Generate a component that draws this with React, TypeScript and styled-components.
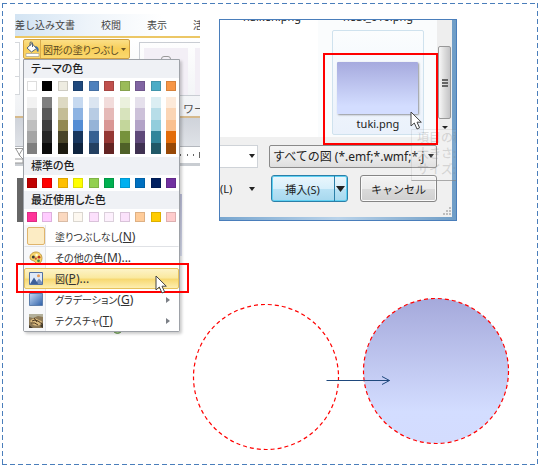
import React from "react";
import styled, { createGlobalStyle, css } from "styled-components";

const GlobalStyle = createGlobalStyle`
  * { box-sizing: border-box; }
  body {
    margin: 0;
    background: #fff;
    font-family: "Noto Sans", "Noto Sans CJK JP", sans-serif;
    font-size: 11px;
    color: #333;
  }
  button, select, input { font: inherit; color: inherit; margin: 0; }
`;

const blue = "#4a7ebb";
const dashX = `repeating-linear-gradient(90deg, ${blue} 0 5px, transparent 5px 8px)`;
const dashY = `repeating-linear-gradient(180deg, ${blue} 0 5px, transparent 5px 8px)`;

const Slide = styled.main`
  margin: 3px 4px 5px 2px;
  padding: 11px 12px 12px 13px;
  display: grid;
  grid-template-columns: 185px minmax(0, 1fr);
  column-gap: 19px;
  align-items: start;
  background:
    ${dashX} top / 100% 1px no-repeat,
    ${dashX} bottom / 100% 1px no-repeat,
    ${dashY} left / 1px 100% no-repeat,
    ${dashY} right / 1px 100% no-repeat;
`;

/* ---------- ribbon ---------- */

const Editor = styled.section`
  position: relative;
`;

const EditorView = styled.div`
  overflow: hidden;
`;

const TabBar = styled.nav`
  display: flex;
  gap: 26px;
  height: 24px;
  border-bottom: 2px solid #ecc766;
  background: linear-gradient(90deg, #d3e4f3, #eef4fa 40%, #fff 80%), #fff;
`;

const Tab = styled.button`
  flex: none;
  border: 0;
  padding: 0;
  background: none;
  font-size: 10px;
  line-height: 22px;
  color: #444;
`;

const Ribbon = styled.div`
  display: grid;
  grid-template-columns: 124px 1fr;
  height: 80px;
  background: linear-gradient(#fff, #eff1f4);
  border-bottom: 2px solid #d5b98c;
`;

const RibbonTools = styled.div`
  display: flex;
  align-items: flex-start;
  padding-top: 1px;
`;

const Spinner = styled.div`
  width: 5px;
  height: 53px;
  margin: 3px 3px 0 0;
  border: 1px solid #d5d8dc;
  border-left: 0;
  background: linear-gradient(#fff 0 16px, #d5d8dc 16px 17px, #fff 17px 33px, #d5d8dc 33px 34px, #fff 34px);
`;

const FillButton = styled.button`
  display: flex;
  align-items: center;
  width: 107px;
  height: 20px;
  padding: 0 3px 0 0;
  border: 1px solid #d0a043;
  border-radius: 2px;
  background: linear-gradient(#fbdf87, #f8ce58 50%, #fbd970);
  color: #5b4a24;
  font-size: 10px;
  white-space: nowrap;
  font-feature-settings: "palt";
`;

const FillIcon = styled.span`
  flex: none;
  display: grid;
  place-items: center;
  width: 17px;
  height: 18px;
  margin-right: 2px;
  border-right: 1px solid #d9ac4c;
`;

const FillText = styled.span`
  flex: 1;
  text-align: left;
`;

const Gallery = styled.div`
  display: flex;
  gap: 7px;
  height: 54px;
  margin-top: 4px;
  padding: 5px 0 0 4px;
  border: 1px solid #c9cdd3;
  border-right: 0;
  overflow: hidden;
`;

const GalleryItem = styled.div`
  flex: none;
  display: flex;
  justify-content: center;
  width: 44px;
  height: 47px;
  padding-top: 7px;
  background: #f3eff6;
`;

const WordArt = styled.div`
  padding: 5px 0 0 44px;
  color: #555;
  line-height: 16px;
  white-space: nowrap;
  overflow: hidden;
`;

const Band = styled.div`
  height: 29px;
  background: linear-gradient(#cfd3da, #dfe2e7);
  border-bottom: 1px solid #b3b7bd;
`;

const Ruler = styled.div`
  display: flex;
  align-items: center;
  justify-content: space-between;
  height: 19px;
  background: #fff;
  border-bottom: 3px solid #c9cdd2;
`;

const Page = styled.div`
  display: flex;
  justify-content: space-between;
  height: 168px;
  padding: 12px 18px 0 2px;
`;

const DarkBlock = styled.div`
  width: 7px;
  height: 44px;
  background: #666;
`;

const LavenderEdge = styled.div`
  width: 3px;
  height: 62px;
  margin-top: 16px;
  background: linear-gradient(#c2c4e0, #dfe4f6);
`;

const ShapeHandle = styled.div`
  position: absolute;
  left: 98px;
  top: 311px;
  width: 9px;
  height: 9px;
  border: 1px solid #6d9a55;
  border-radius: 50%;
  background: #a9d18e;
`;

/* ---------- drop-down menu ---------- */

const Menu = styled.div`
  position: absolute;
  left: 8px;
  top: 45px;
  width: 157px;
  border: 1px solid #9ea2a8;
  border-radius: 0 0 2px 2px;
  background: #fff;
  box-shadow: 2px 2px 3px #0003;
  font-feature-settings: "palt";
`;

const GroupTitle = styled.h2`
  margin: 0;
  padding-left: 7px;
  height: 18px;
  line-height: 18px;
  font-size: 11px;
  font-weight: 500;
  color: #222;
  background: #eff1f5;
`;

const Swatches = styled.div`
  display: flex;
  justify-content: space-between;
  padding: 3px;
`;

const Swatch = styled.button<{ $c: string }>`
  width: 10px;
  height: 10px;
  padding: 0;
  border: 1px solid #0002;
  background: ${(p) => p.$c};
`;

const Shades = styled.div`
  display: grid;
  grid-template-rows: repeat(5, 1fr);
  width: 10px;
  height: 57px;
`;

const Shade = styled.button<{ $c: string }>`
  padding: 0;
  border: 0;
  background: ${(p) => p.$c};
`;

const Items = styled.div`
  display: flex;
  flex-direction: column;
  background: linear-gradient(90deg, #f7f8fa 21px, #e3e5e9 21px 22px, #fff 22px);
`;

const Item = styled.button<{ $active?: boolean; $ruled?: boolean }>`
  display: flex;
  align-items: center;
  height: 21px;
  padding: 0 8px 0 2px;
  border: 1px solid transparent;
  background: none;
  color: #333;
  font-size: 10px;
  white-space: nowrap;
  font-feature-settings: "palt";
  ${(p) => p.$ruled && css`height: 22px; border-bottom-color: #e0e2e6;`}
  ${(p) =>
    p.$active &&
    css`
      border-color: #e6c15b;
      border-radius: 2px;
      background: linear-gradient(#fdf3c8, #fae9a0 45%, #f7d973 55%, #fdeeb0);
    `}
`;

const ItemIcon = styled.span`
  display: grid;
  place-items: center;
  width: 18px;
  height: 18px;
  margin-right: 10px;
`;

const ItemText = styled.span`
  flex: 1;
  text-align: left;
`;

const KeyHint = styled.span`
  font-size: 12px;
`;

const NoFill = styled.span`
  width: 18px;
  height: 18px;
  border: 1px solid #dfb46c;
  border-radius: 2px;
  background: #fcecc4;
`;

const MenuMark = styled.div`
  position: absolute;
  left: -8px;
  top: 203px;
  width: 173px;
  height: 30px;
  border: 2px solid #f00;
  pointer-events: none;
`;

const MenuPointer = styled.div`
  position: absolute;
  right: 19px;
  bottom: -4px;
  line-height: 0;
`;

/* ---------- insert dialog ---------- */

const RightColumn = styled.div`
  padding-top: 5px;
`;

const Dialog = styled.section`
  position: relative;
  max-width: 238px;
  padding: 0 4px 3px 0;
  border: 1px solid ${blue};
  background: linear-gradient(90deg, #78a6cf, #b9d3ea 50%, #6f9dc6);
  overflow: hidden;
  color: #222;
`;

const FileArea = styled.div`
  display: flex;
  height: 117px;
  background: linear-gradient(90deg, #fff 98px, #fafcfd 98px);
`;

const Files = styled.div`
  flex: 1;
  display: grid;
  grid-template-columns: 92px 92px;
  column-gap: 14px;
  align-content: start;
  padding-left: 6px;
`;

const FileName = styled.span`
  height: 14px;
  margin: -10px 0 6px;
  line-height: 14px;
  text-align: center;
`;

const SelectedFile = styled.div`
  position: relative;
  grid-column: 2;
  height: 105px;
  padding: 31px 0 0 4px;
  border: 1px solid #cfe2ee;
  border-radius: 2px;
  background: linear-gradient(#fbfdfe, #eaf1fb);
`;

const Thumb = styled.div`
  width: 81px;
  height: 52px;
  border-radius: 1px;
  background: linear-gradient(#a6aade, #d3ddff 85%);
  box-shadow: 1px 1px 2px #0006;
`;

const ThumbName = styled.div`
  width: 82px;
  line-height: 20px;
  text-align: center;
`;

const FileMark = styled.div`
  position: absolute;
  z-index: 1;
  left: -10px;
  top: 22px;
  width: 115px;
  height: 92px;
  border: 2px solid #f00;
  pointer-events: none;
`;

const FilePointer = styled.div`
  position: absolute;
  z-index: 2;
  left: 77px;
  top: 80px;
  line-height: 0;
`;

const ScrollBar = styled.div`
  display: flex;
  flex-direction: column;
  align-items: center;
  justify-content: flex-end;
  gap: 7px;
  width: 15px;
  padding-bottom: 8px;
  background: #eee;
`;

const ScrollThumb = styled.div`
  display: flex;
  flex-direction: column;
  align-items: center;
  justify-content: center;
  gap: 1px;
  width: 13px;
  height: 73px;
  border: 1px solid #989898;
  border-radius: 2px;
  background: linear-gradient(90deg, #f7f7f7, #dcdcdc 50%, #c4c4c6);
`;

const Grip = styled.i`
  width: 6px;
  height: 2px;
  background: #666;
`;

const Footer = styled.form`
  display: grid;
  row-gap: 7px;
  padding: 8px 15px 15px 0;
  background: #f0f0f0;
`;

const FooterRow = styled.div`
  display: flex;
  justify-content: space-between;
  align-items: center;
`;

const Field = styled.div<{ $w: number }>`
  position: relative;
  flex: 0 0 ${(p) => p.$w}px;
  display: flex;
`;

const NameInput = styled.input`
  width: 100%;
  height: 23px;
  border: 1px solid #cfd3d8;
  border-left: 0;
  background: #fff;
`;

const TypeSelect = styled.select`
  appearance: none;
  width: 100%;
  height: 23px;
  padding: 0 10px 0 3px;
  border: 1px solid #8a8a8a;
  border-radius: 2px;
  background: linear-gradient(#f4f4f4, #ececec 50%, #dedede);
  font-size: 12px;
`;

const FieldCaret = styled.span`
  position: absolute;
  right: 3px;
  top: 9px;
  line-height: 0;
  pointer-events: none;
`;

const Tools = styled.button`
  display: flex;
  align-items: center;
  justify-content: space-between;
  width: 38px;
  padding: 0 3px 0 0;
  border: 0;
  background: none;
`;

const Split = styled.div`
  display: flex;
  width: 77px;
  height: 27px;
  border: 1px solid #2b7fa8;
  border-radius: 3px;
  background: linear-gradient(#eaf6fc, #d7effb 50%, #b9e2f5 52%, #a6d8ee);
  box-shadow: inset 0 0 0 1px #5fd0f2;
`;

const SplitPart = styled.button<{ $arrow?: boolean }>`
  flex: ${(p) => (p.$arrow ? "0 0 13px" : "1")};
  display: grid;
  place-items: center;
  padding: 0;
  border: 0;
  background: none;
  ${(p) => p.$arrow && css`border-left: 1px solid #2b7fa8;`}
`;

const Cancel = styled.button`
  width: 77px;
  height: 27px;
  padding: 0;
  border: 1px solid #858585;
  border-radius: 3px;
  background: linear-gradient(#f3f3f3, #ebebeb 50%, #dadada 52%, #d0d0d0);
  box-shadow: inset 0 0 0 1px #fafafa;
`;

const ResizeGrip = styled.div`
  position: absolute;
  right: 5px;
  bottom: 5px;
  line-height: 0;
`;

const GhostTip = styled.div`
  position: absolute;
  right: 0;
  top: 109px;
  width: 45px;
  height: 52px;
  padding-left: 5px;
  border: 1px solid #00000012;
  border-right: 0;
  border-bottom: 1px solid #808080a0;
  background: #ffffff18;
  color: #80808040;
  font-size: 12px;
  font-weight: 500;
  line-height: 16px;
  white-space: nowrap;
  overflow: hidden;
  pointer-events: none;
`;

const Figure = styled.svg`
  display: block;
  width: 320px;
  height: 158px;
  margin: 74px 0 0 -29px;
`;

const Caret = ({ w = 6, h = 4, color = "#222" }) => (
  <svg width={w} height={h} viewBox="0 0 6 4" preserveAspectRatio="none" aria-hidden>
    <path d="M0 0H6L3 4Z" fill={color} />
  </svg>
);

const Pointer = () => (
  <svg width="13" height="20" viewBox="0 0 13 20" aria-hidden>
    <path d="M1 1V15L4.3 12L7 18L9.6 16.8L7 11.2H11.3Z" fill="#fff" stroke="#444" />
  </svg>
);

const SubArrow = () => (
  <svg width="4" height="6" viewBox="0 0 4 6" aria-hidden>
    <path d="M0 0L4 3L0 6Z" fill="#7b7f86" />
  </svg>
);

const BucketIcon = () => (
  <svg width="15" height="16" viewBox="0 0 15 16" aria-hidden>
    <path d="M2 7L7 2.5L11.5 7.5L6.5 11Z" fill="#fff" stroke="#53657c" />
    <path d="M5 5V1.5Q6.5 0 7.5 2V6" fill="none" stroke="#53657c" />
    <path d="M10 5Q14.5 5.5 13.5 10.5Q11.5 11.5 11.5 8Z" fill="#3e6ea8" />
    <path d="M1 12.5H14V15.5H1Z" fill="#fff" stroke="#a7a28d" strokeWidth=".7" />
  </svg>
);

const PaletteIcon = () => (
  <svg width="14" height="14" viewBox="0 0 14 14" aria-hidden>
    <path d="M7 1C11 1 13 4 13 7.5C13 11 10.5 13 8 13C6 13 7 10.5 5 10C3 9.5 1 9 1 6.5C1 3 4 1 7 1Z" fill="#f6d56b" stroke="#b98a2e" strokeWidth=".8" />
    <circle cx="4.3" cy="6" r="1.5" fill="#3d3b35" />
    <circle cx="7.6" cy="4" r="1.3" fill="#fff7d8" />
    <circle cx="10" cy="6.2" r="1.4" fill="#b83226" />
    <circle cx="9.5" cy="9.8" r="1.4" fill="#3f8a46" />
    <circle cx="6.8" cy="7.7" r="1.1" fill="#c44a36" />
  </svg>
);

const PictureIcon = () => (
  <svg width="14" height="13" viewBox="0 0 14 13" aria-hidden>
    <path d="M.5 .5H13.5V12.5H.5Z" fill="#dfe9f7" stroke="#5371a2" />
    <path d="M1 12L5 5.5L8 10L10 8L13 12Z" fill="#3d5f99" />
    <path d="M8 9L10 6.5L13 10V12H9Z" fill="#7590bd" />
    <circle cx="9.5" cy="3.8" r="1.5" fill="#e89a55" />
  </svg>
);

const GradientIcon = () => (
  <svg width="14" height="13" viewBox="0 0 14 13" aria-hidden>
    <defs>
      <linearGradient id="gi" x1="0" y1="0" x2="1" y2="1">
        <stop offset="0" stopColor="#c5dbf5" />
        <stop offset="1" stopColor="#2d5fa8" />
      </linearGradient>
    </defs>
    <path d="M.5 .5H13.5V12.5H.5Z" fill="url(#gi)" stroke="#5c7eac" />
  </svg>
);

const TextureIcon = () => (
  <svg width="14" height="14" viewBox="0 0 14 14" aria-hidden>
    <path d="M0 0H14V14H0Z" fill="#8d7a58" />
    <path d="M0 0H14V3L9 2L4 4L0 3Z" fill="#b3b09b" />
    <path d="M1 7Q4 3 8 5T13 7L11 11Q6 13 3 10Z" fill="#d9b97d" />
    <path d="M3 7Q6 5 9 7T13 10M2 9Q6 8 9 11M5 4L8 8" fill="none" stroke="#4b3923" />
    <path d="M0 11L4 14H0ZM11 12L14 9V14Z" fill="#42392a" />
  </svg>
);

const theme = ["#ffffff", "#000000", "#eeece1", "#1f497d", "#4f81bd", "#c0504d", "#9bbb59", "#8064a2", "#4bacc6", "#f79646"];
const shades = [
  ["#f2f2f2", "#d8d8d8", "#bfbfbf", "#a5a5a5", "#7f7f7f"],
  ["#7f7f7f", "#595959", "#3f3f3f", "#262626", "#0c0c0c"],
  ["#ddd9c3", "#c4bd97", "#938953", "#494429", "#1d1b10"],
  ["#c6d9f0", "#8db3e2", "#548dd4", "#17365d", "#0f243e"],
  ["#dbe5f1", "#b8cce4", "#95b3d7", "#366092", "#244061"],
  ["#f2dcdb", "#e5b9b7", "#d99694", "#953734", "#632423"],
  ["#ebf1dd", "#d7e3bc", "#c3d69b", "#76923c", "#4f6128"],
  ["#e5e0ec", "#ccc1d9", "#b2a2c7", "#5f497a", "#3f3151"],
  ["#dbeef3", "#b7dde8", "#92cddc", "#31859b", "#205867"],
  ["#fdeada", "#fbd5b5", "#fac08f", "#e36c09", "#974806"],
];
const standard = ["#c00000", "#ff0000", "#ffc000", "#ffff00", "#92d050", "#00b050", "#00b0f0", "#0070c0", "#002060", "#7030a0"];
const recent = ["#ff3399", "#ffccff", "#fbd9c0", "#fdf8f0", "#fce0fc", "#fdf0fd", "#fbe2fb", "#ffcc99", "#ffcc00", "#ffcccc"];

const SwatchRow = ({ colors }: { colors: string[] }) => (
  <Swatches>
    {colors.map((c) => (
      <Swatch key={c} $c={c} aria-label={c} />
    ))}
  </Swatches>
);

export default function App() {
  return (
    <>
      <GlobalStyle />
      <Slide>
        <Editor>
          <EditorView>
            <TabBar>
              <Tab>差し込み文書</Tab>
              <Tab>校閲</Tab>
              <Tab>表示</Tab>
              <Tab>活</Tab>
            </TabBar>
            <Ribbon>
              <RibbonTools>
                <Spinner />
                <FillButton>
                  <FillIcon><BucketIcon /></FillIcon>
                  <FillText>図形の塗りつぶし</FillText>
                  <Caret w={5} h={3} color="#6b5424" />
                </FillButton>
              </RibbonTools>
              <div>
                <Gallery>
                  <GalleryItem>
                    <svg width="12" height="8" viewBox="0 0 12 8" aria-hidden>
                      <path d="M1.5 8V4Q1.5 1.5 4 1.5H8Q10.5 1.5 10.5 4V8" fill="none" stroke="#999" />
                    </svg>
                  </GalleryItem>
                  <GalleryItem />
                </Gallery>
                <WordArt>ワー</WordArt>
              </div>
            </Ribbon>
            <Band />
            <Ruler>
              <svg width="9" height="17" viewBox="0 0 9 17" aria-hidden>
                <path d="M0 1.5H8L4 8L8 12V16H0M0 12H8M1 2L5 9" fill="none" stroke="#999" />
              </svg>
              <svg width="22" height="6" viewBox="0 0 22 6" aria-hidden>
                <path d="M1 2H3V4H1ZM9 2H10V4H9ZM15 2H16V4H15ZM21 0H22V6H21Z" fill="#666" />
              </svg>
            </Ruler>
            <Page>
              <DarkBlock />
              <LavenderEdge />
            </Page>
          </EditorView>
          <ShapeHandle />
          <Menu>
            <GroupTitle>テーマの色</GroupTitle>
            <SwatchRow colors={theme} />
            <Swatches>
              {shades.map((col) => (
                <Shades key={col[4]}>
                  {col.map((c) => (
                    <Shade key={c} $c={c} aria-label={c} />
                  ))}
                </Shades>
              ))}
            </Swatches>
            <GroupTitle>標準の色</GroupTitle>
            <SwatchRow colors={standard} />
            <GroupTitle>最近使用した色</GroupTitle>
            <SwatchRow colors={recent} />
            <Items>
              <Item $ruled>
                <ItemIcon><NoFill /></ItemIcon>
                <ItemText>塗りつぶしなし<KeyHint>(<u>N</u>)</KeyHint></ItemText>
              </Item>
              <Item>
                <ItemIcon><PaletteIcon /></ItemIcon>
                <ItemText>その他の色<KeyHint>(<u>M</u>)...</KeyHint></ItemText>
              </Item>
              <Item $active>
                <ItemIcon><PictureIcon /></ItemIcon>
                <ItemText>図<KeyHint>(<u>P</u>)...</KeyHint></ItemText>
              </Item>
              <Item>
                <ItemIcon><GradientIcon /></ItemIcon>
                <ItemText>グラデーション<KeyHint>(<u>G</u>)</KeyHint></ItemText>
                <SubArrow />
              </Item>
              <Item>
                <ItemIcon><TextureIcon /></ItemIcon>
                <ItemText>テクスチャ<KeyHint>(<u>T</u>)</KeyHint></ItemText>
                <SubArrow />
              </Item>
            </Items>
            <MenuMark>
              <MenuPointer><Pointer /></MenuPointer>
            </MenuMark>
          </Menu>
        </Editor>

        <RightColumn>
          <Dialog>
            <FileArea>
              <Files>
                <FileName>haiken.png</FileName>
                <FileName>heat_010.png</FileName>
                <SelectedFile>
                  <Thumb />
                  <ThumbName>tuki.png</ThumbName>
                  <FileMark />
                  <FilePointer><Pointer /></FilePointer>
                </SelectedFile>
              </Files>
              <ScrollBar>
                <ScrollThumb><Grip /><Grip /><Grip /></ScrollThumb>
                <Caret h={3} />
              </ScrollBar>
            </FileArea>
            <Footer onSubmit={(e) => e.preventDefault()}>
              <FooterRow>
                <Field $w={38}>
                  <NameInput aria-label="ファイル名" />
                  <FieldCaret><Caret /></FieldCaret>
                </Field>
                <Field $w={168}>
                  <TypeSelect aria-label="ファイルの種類">
                    <option>すべての図 (*.emf;*.wmf;*.j</option>
                  </TypeSelect>
                  <FieldCaret><Caret /></FieldCaret>
                </Field>
              </FooterRow>
              <FooterRow>
                <Tools type="button">(L)<Caret /></Tools>
                <Split>
                  <SplitPart type="submit">挿入(S)</SplitPart>
                  <SplitPart $arrow type="button" aria-label="挿入オプション"><Caret w={9} h={6} /></SplitPart>
                </Split>
                <Cancel type="button">キャンセル</Cancel>
              </FooterRow>
            </Footer>
            <ResizeGrip>
              <svg width="8" height="8" viewBox="0 0 8 8" aria-hidden>
                <path d="M6 0H8V2H6ZM3 3H5V5H3ZM6 3H8V5H6ZM0 6H2V8H0ZM3 6H5V8H3ZM6 6H8V8H6Z" fill="#bdbdbd" />
              </svg>
            </ResizeGrip>
            <GhostTip>項目の種<br />大きさ:<br />サイズ:</GhostTip>
          </Dialog>
          <Figure viewBox="0 0 320 158" aria-label="塗りつぶし前と後の円">
            <defs>
              <linearGradient id="moon" x1="0" y1="0" x2="0" y2="1">
                <stop offset="0" stopColor="#a5a9db" />
                <stop offset=".78" stopColor="#d3ddff" />
                <stop offset="1" stopColor="#d3dcfe" />
              </linearGradient>
            </defs>
            <circle cx="76" cy="82" r="72.5" fill="none" stroke="#f00" strokeWidth="1.2" strokeDasharray="4 3" />
            <circle cx="246" cy="76" r="72.5" fill="url(#moon)" stroke="#f00" strokeWidth="1.2" strokeDasharray="4 3" />
            <path d="M136.500 85.500H199.500M192 81.500L199.500 85.500L192 89.500" fill="none" stroke="#1f497d" />
          </Figure>
        </RightColumn>
      </Slide>
    </>
  );
}
